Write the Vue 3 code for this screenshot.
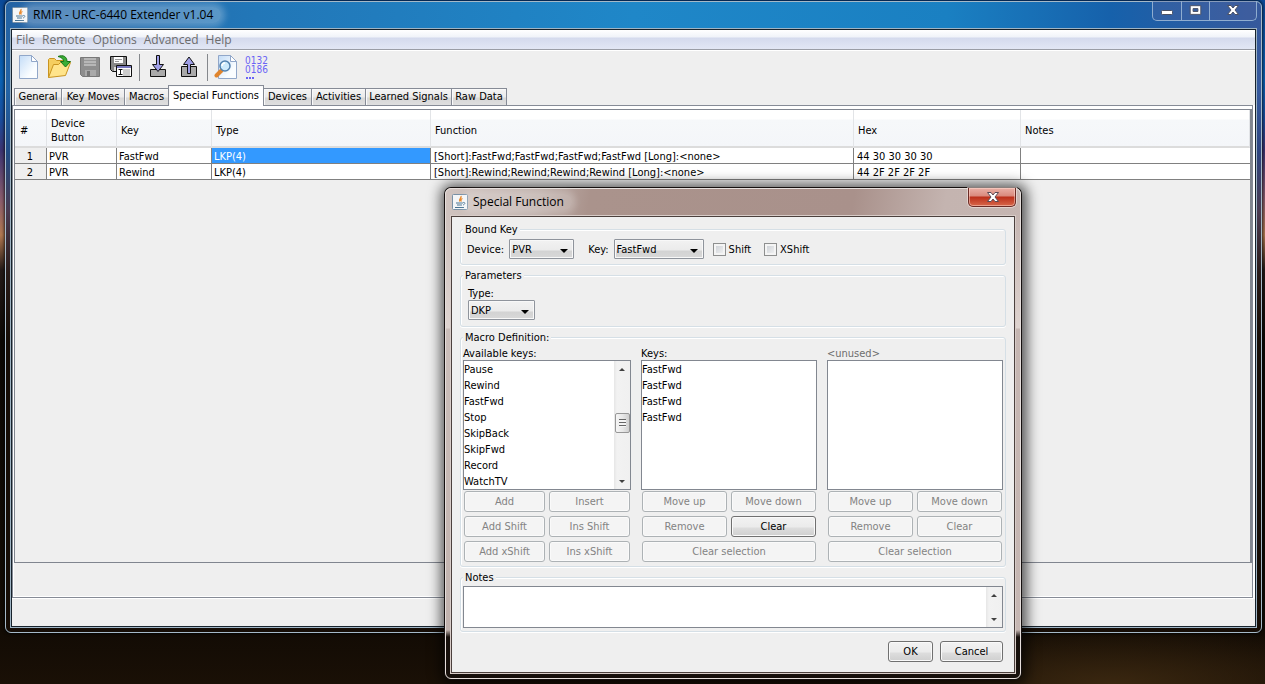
<script setup>
import { ref } from 'vue'

const menus = ['File', 'Remote', 'Options', 'Advanced', 'Help']

const tabs = [
  { name: 'General', width: 47 },
  { name: 'Key Moves', width: 63 },
  { name: 'Macros', width: 44 },
  { name: 'Special Functions', width: 96 },
  { name: 'Devices', width: 47 },
  { name: 'Activities', width: 54 },
  { name: 'Learned Signals', width: 86 },
  { name: 'Raw Data', width: 56 },
]
const activeTab = ref('Special Functions')

const columns = ['#', 'Device Button', 'Key', 'Type', 'Function', 'Hex', 'Notes']
const rows = [
  ['1', 'PVR', 'FastFwd', 'LKP(4)', '[Short]:FastFwd;FastFwd;FastFwd;FastFwd [Long]:<none>', '44 30 30 30 30', ''],
  ['2', 'PVR', 'Rewind', 'LKP(4)', '[Short]:Rewind;Rewind;Rewind;Rewind [Long]:<none>', '44 2F 2F 2F 2F', ''],
]

const device = ref('PVR')
const boundKey = ref('FastFwd')
const type = ref('DKP')
const shift = ref(false)
const xshift = ref(false)
const notes = ref('')

const available = ['Pause', 'Rewind', 'FastFwd', 'Stop', 'SkipBack', 'SkipFwd', 'Record', 'WatchTV']
const keys = ['FastFwd', 'FastFwd', 'FastFwd', 'FastFwd']
const addButtons = ['Add', 'Insert', 'Add Shift', 'Ins Shift', 'Add xShift', 'Ins xShift']
const editButtons = ['Move up', 'Move down', 'Remove', 'Clear', 'Clear selection']
</script>

<template>
  <div class="desktop">
    <section class="window main" aria-label="RMIR">
      <header class="titlebar">
        <svg class="java" viewBox="0 0 16 16" aria-hidden="true">
          <rect x=".5" y=".5" width="15" height="15" rx="1" fill="#f3f5f7" stroke="#7890a5" />
          <path d="M9 2c1 2-3 3-1 5.500M10.500 4.500c-2 1-2 1.500-1 3" fill="none" stroke="#e8801c" stroke-width="1.300" />
          <path d="M4 9h7M5 11h5M3 13.500h9M11 8.500c3-.5 2 2 0 2.500" fill="none" stroke="#44708f" />
        </svg>
        <h1>RMIR - URC-6440 Extender v1.04</h1>
        <div class="controls">
          <button type="button" aria-label="Minimize">
            <svg viewBox="0 0 28 18"><rect x="8.500" y="8.500" width="11" height="4" rx="1" fill="#fff" stroke="#4a5064" /></svg>
          </button>
          <button type="button" aria-label="Maximize">
            <svg viewBox="0 0 28 18"><path d="M8.500 3.500h11v9h-11zM11.500 6.500v3h5v-3z" fill="#fff" fill-rule="evenodd" stroke="#4a5064" /></svg>
          </button>
          <button type="button" class="wide" aria-label="Close">
            <svg viewBox="0 0 46 18"><path d="M17.500 3.500h3.500l2 2.500 2-2.500h3.500l-3.500 4.500 3.500 4.500h-3.500l-2-2.500-2 2.500h-3.500l3.500-4.500z" fill="#fff" stroke="#4a5064" /></svg>
          </button>
        </div>
      </header>

      <div class="client">
        <nav class="menubar">
          <button v-for="m in menus" :key="m" type="button">{{ m }}</button>
        </nav>

        <div class="toolbar" role="toolbar">
          <button type="button" aria-label="New">
            <svg viewBox="0 0 24 24">
              <defs><linearGradient id="paper" x1="0" y1="0" x2="1" y2="1"><stop offset="0" stop-color="#c3dcf7" /><stop offset=".7" stop-color="#fafdff" /></linearGradient></defs>
              <path d="M3.500.5h12l6 6v17h-18z" fill="url(#paper)" stroke="#91a7c9" />
              <path d="M15.500.5v6h6z" fill="#fff" stroke="#91a7c9" />
            </svg>
          </button>
          <button type="button" aria-label="Open">
            <svg viewBox="0 0 24 24">
              <path d="M1.500 22.500V4.500l1-1h5l2 2h8v4" fill="#f5ce60" stroke="#c99420" />
              <path d="M1.500 22.500l5-13h5l2-2h10l-5 13z" fill="#ffe48b" stroke="#c99420" stroke-linejoin="round" />
              <path d="M11 1.500c5-2 9 0 9 5h3.500l-5 5.500-5-5.500h3.200c0-2-1.700-4-5.700-5z" fill="#3aad35" stroke="#187318" />
            </svg>
          </button>
          <button type="button" aria-label="Save" disabled>
            <svg viewBox="0 0 24 24">
              <path d="M2.500 2.500h19v19h-17l-2-2z" fill="#8e8e8e" stroke="#787878" />
              <path d="M6 3h12v8H6z" fill="#b7b7b7" />
              <path d="M6 5.500h12M6 8.500h12" stroke="#989898" />
              <path d="M7 15h11v6H7z" fill="#a9a9a9" /><path d="M9 16h3v5H9z" fill="#777" />
            </svg>
          </button>
          <button type="button" aria-label="Save as">
            <svg viewBox="0 0 24 24">
              <path d="M1.500 1.500h16v15h-14l-2-2z" fill="#888" stroke="#111" />
              <path d="M5 2h9v6H5z" fill="#fff" /><path d="M6 4.500h7M6 6.500h4" stroke="#999" />
              <path d="M5 12h5v4H5z" fill="#ddd" />
              <path d="M7.500 10.500h15v11h-15z" fill="#fff" stroke="#111" />
              <path d="M8 11h14v2H8z" fill="#7777bd" /><path d="M14 14h7v7h-7z" fill="#ccc" />
              <path d="M9.500 14.500h4M11.500 14.500v5M9.500 19.500h4" stroke="#111" />
            </svg>
          </button>
          <i class="sep"></i>
          <button type="button" aria-label="Download">
            <svg viewBox="0 0 24 24">
              <path d="M4.500 14.500h15v7h-15z" fill="#aaa" stroke="#111" />
              <path d="M10.500.5h3v9h4L12 16.500 6.500 9.500h4z" fill="#a0a0e8" stroke="#111" />
            </svg>
          </button>
          <button type="button" aria-label="Upload">
            <svg viewBox="0 0 24 24">
              <path d="M4.500 11.500h15v10h-15z" fill="#aaa" stroke="#111" />
              <path d="M10.500 18.500v-9h-4L12 2l5.500 7.500h-4v9z" fill="#a0a0e8" stroke="#111" />
            </svg>
          </button>
          <i class="sep"></i>
          <button type="button" aria-label="Preview">
            <svg viewBox="0 0 24 24">
              <path d="M4.500.5h12l6 6v17h-18z" fill="url(#paper)" stroke="#91a7c9" />
              <path d="M16.500.5v6h6z" fill="#fff" stroke="#91a7c9" />
              <path d="M2.500 20.500l5-5" stroke="#e0842c" stroke-width="4" stroke-linecap="round" />
              <circle cx="11" cy="11" r="5" fill="#cdeafc" stroke="#5180ae" stroke-width="1.500" />
              <path d="M8 11c0-2 1-3 3-3" fill="none" stroke="#fff" stroke-width="1.500" />
            </svg>
          </button>
          <button type="button" class="digits" aria-label="Raw codes"><span>0132</span><span>0186</span><i></i></button>
        </div>

        <div class="tabs" role="tablist">
          <button
            v-for="t in tabs" :key="t.name" type="button" role="tab"
            :aria-selected="t.name === activeTab" :class="{ on: t.name === activeTab }"
            :style="{ width: t.width + 'px' }" @click="activeTab = t.name"
          >{{ t.name }}</button>
        </div>

        <div class="pane">
          <div class="scrollpane">
            <table>
              <colgroup><col class="c0" /><col class="c1" /><col class="c2" /><col class="c3" /><col class="c4" /><col class="c5" /><col /></colgroup>
              <thead>
                <tr><th v-for="c in columns" :key="c" scope="col">{{ c }}</th></tr>
              </thead>
              <tbody>
                <tr v-for="(r, i) in rows" :key="i">
                  <td v-for="(v, j) in r" :key="j" :class="{ sel: i === 0 && j === 3 }">{{ v }}</td>
                </tr>
              </tbody>
            </table>
          </div>
        </div>
        <div class="status"></div>
      </div>
    </section>

    <section class="window dialog" role="dialog" aria-label="Special Function">
      <header class="titlebar">
        <svg class="java" viewBox="0 0 16 16" aria-hidden="true">
          <rect x=".5" y=".5" width="15" height="15" rx="1" fill="#f3f5f7" stroke="#7890a5" />
          <path d="M9 2c1 2-3 3-1 5.500M10.500 4.500c-2 1-2 1.500-1 3" fill="none" stroke="#e8801c" stroke-width="1.300" />
          <path d="M4 9h7M5 11h5M3 13.500h9M11 8.500c3-.5 2 2 0 2.500" fill="none" stroke="#44708f" />
        </svg>
        <h1>Special Function</h1>
        <button type="button" class="close" aria-label="Close">
          <svg viewBox="0 0 46 18"><path d="M18.500 4.500h3.500l2 2.500 2-2.500h3.500l-3.500 4.500 3.500 4.500h-3.500l-2-2.500-2 2.500h-3.500l3.500-4.500z" fill="#fff" stroke="#5a4a55" /></svg>
        </button>
      </header>

      <form class="client" @submit.prevent>
        <fieldset>
          <legend>Bound Key</legend>
          <div class="bound">
            <label for="device">Device:</label>
            <span class="combo device"><select id="device" v-model="device"><option>PVR</option></select></span>
            <label for="key">Key:</label>
            <span class="combo key"><select id="key" v-model="boundKey"><option>FastFwd</option><option>Rewind</option></select></span>
            <label class="check"><input v-model="shift" type="checkbox" />Shift</label>
            <label class="check"><input v-model="xshift" type="checkbox" />XShift</label>
          </div>
        </fieldset>

        <fieldset>
          <legend>Parameters</legend>
          <div class="params">
            <label for="type">Type:</label>
            <span class="combo type"><select id="type" v-model="type"><option>DKP</option><option>LKP</option></select></span>
          </div>
        </fieldset>

        <fieldset>
          <legend>Macro Definition:</legend>
          <div class="macro">
            <div>
              <div id="l1" class="caption">Available keys:</div>
              <div class="box">
                <ul role="listbox" aria-labelledby="l1"><li v-for="k in available" :key="k" role="option">{{ k }}</li></ul>
                <div class="scrollbar" aria-hidden="true">
                  <i class="up"></i><i class="thumb"></i><i class="down"></i>
                </div>
              </div>
              <div class="buttons"><button v-for="b in addButtons" :key="b" type="button" disabled>{{ b }}</button></div>
            </div>
            <div>
              <div id="l2" class="caption">Keys:</div>
              <div class="box">
                <ul role="listbox" aria-labelledby="l2"><li v-for="(k, i) in keys" :key="i" role="option">{{ k }}</li></ul>
              </div>
              <div class="buttons"><button v-for="b in editButtons" :key="b" type="button" :disabled="b !== 'Clear'">{{ b }}</button></div>
            </div>
            <div>
              <div id="l3" class="caption unused">&lt;unused&gt;</div>
              <div class="box"><ul role="listbox" aria-labelledby="l3"></ul></div>
              <div class="buttons"><button v-for="b in editButtons" :key="b" type="button" disabled>{{ b }}</button></div>
            </div>
          </div>
        </fieldset>

        <fieldset>
          <legend id="notes-title">Notes</legend>
          <div class="box notes">
            <textarea v-model="notes" aria-labelledby="notes-title"></textarea>
            <div class="scrollbar" aria-hidden="true"><i class="up"></i><i class="down"></i></div>
          </div>
        </fieldset>

        <footer>
          <button type="submit" class="ok">OK</button>
          <button type="button" class="cancel">Cancel</button>
        </footer>
      </form>
    </section>
  </div>
</template>

<style>
body { background: #120b05; }
</style>

<style scoped>
* { box-sizing: border-box; margin: 0; padding: 0; }
button, select, textarea, input { font: inherit; color: inherit; }
.desktop {
  position: relative;
  min-height: 100vh;
  overflow: hidden;
  font: 11px/14px "DejaVu Sans Condensed", "DejaVu Sans", sans-serif;
  color: #000;
  background:
    radial-gradient(ellipse 260px 60px at 88% 100%, #3a2710 0%, transparent 100%),
    linear-gradient(#0b4a98 0, #0a62b4 80px, #1a4c9c 120px, #3c3472 150px, #8a5c6c 200px, #b07850 235px, #241a18 270px, #0c0804 340px, #120b04 630px, #1a1006 100%);
}
.window { position: absolute; display: flex; flex-direction: column; border: 1px solid; border-radius: 6px; }
.titlebar { display: flex; align-items: flex-start; }
.titlebar h1 { font: 12px/16px "Open Sans", "Noto Sans", sans-serif; white-space: nowrap; }
.java { width: 16px; height: 16px; flex: none; }
.titlebar button { border: 0; background: none; }
.titlebar button svg { display: block; width: 100%; height: 18px; }

.main {
  inset: 1px 3px 51px 5px;
  border-color: #a5b9c8;
  padding: 0 5px 5px;
  box-shadow: 0 0 3px 1px rgba(0, 0, 0, .7);
  background:
    linear-gradient(transparent 0, transparent 90px, rgba(26, 20, 60, .3) 150px, #4a3a50 210px, #2a1c1a 270px, #160d06 340px),
    linear-gradient(90deg, #2463a4 0, #2277b8 20%, #1f87c8 50%, #1a80c2 75%, #1661ab 88%, #36599c 100%);
}
.main > .titlebar { height: 27px; padding: 5px 0 0 1px; }
.main h1, .dialog h1 { margin-left: -3px; padding: 0 8px; border-radius: 8px; }
.main h1 { background: rgba(255, 255, 255, .25); box-shadow: 0 0 6px 4px rgba(255, 255, 255, .25); }
.controls {
  display: flex;
  margin: -6px -1px 0 auto;
  border: 1px solid #8fadd0;
  border-top: 0;
  border-radius: 0 0 5px 5px;
  background: rgba(80, 100, 160, .35);
}
.controls button { width: 28px; height: 19px; border-left: 1px solid #8fadd0; }
.controls button:first-child { border-left: 0; }
.controls .wide { width: 47px; }
.client { background: #efefef; display: flex; flex-direction: column; flex: 1; border: 1px solid #17222c; }
.main > .client { box-shadow: 0 0 0 1px #9fb4c4; }

.menubar {
  display: flex;
  gap: 7px;
  height: 20px;
  padding-left: 4px;
  border-bottom: 1px solid #9a9da6;
  background: linear-gradient(#fff 0, #f0f3f9 7px, #d4daed 8px, #e2e7f5 100%);
  font: 12px/19px "Open Sans", "Noto Sans", sans-serif;
  color: #6d6d6d;
}
.menubar button { border: 0; background: none; }
.toolbar { display: flex; align-items: center; height: 35px; padding: 0 0 2px; border-top: 1px solid #fff; }
.toolbar button { width: 31px; height: 30px; border: 0; background: none; display: flex; align-items: center; justify-content: center; }
.toolbar svg { width: 24px; height: 24px; }
.toolbar .sep { width: 1px; height: 27px; margin: 0 2px 0 3px; background: #85888c; }
.toolbar .digits { flex-direction: column; color: #6a64f5; font: 10px/9px "DejaVu Sans Condensed", sans-serif; }
.toolbar .digits i {
  width: 8px; height: 2px; margin: 3px 0 0 5px; align-self: flex-start;
  background: repeating-linear-gradient(90deg, #6a64f5 0, #6a64f5 2px, transparent 2px, transparent 3px);
}

.tabs { display: flex; align-items: flex-end; height: 20px; padding-left: 2px; }
.tabs button {
  height: 17px;
  border: 1px solid #868b96;
  border-bottom: 0;
  border-right-width: 0;
  background: linear-gradient(#f4f4f4 0, #ebebeb 8px, #d7d7d7 9px, #dfdfdf 100%);
  line-height: 16px;
  white-space: nowrap;
  box-shadow: inset 1px 1px #fafafa;
}
.tabs button:last-child { border-right-width: 1px; }
.tabs .on { position: relative; height: 21px; margin-bottom: -1px; padding-bottom: 2px; border-right-width: 1px; background: #fff; line-height: 17px; }
.tabs .on + button { border-left: 0; }
.pane { flex: 1; display: flex; margin-right: 2px; padding: 3px 0 34px 1px; border: 1px solid #868b96; box-shadow: inset 1px 3px #fff, inset 0 -1px #fff, 2px 0 #fff; }
.scrollpane { flex: 1; border: 1px solid #80858f; border-right-width: 2px; }
.status { height: 28px; border-top: 1px solid #fff; }

table { width: 100%; table-layout: fixed; border-collapse: separate; border-spacing: 0; background: #fff; }
.c0 { width: 32px; }
.c1 { width: 70px; }
.c2 { width: 95px; }
.c3 { width: 219px; }
.c4 { width: 423px; }
.c5 { width: 167px; }
th {
  height: 38px; padding: 5px 4px 0;
  text-align: left; font-weight: normal; vertical-align: middle;
  border-right: 1px solid #e2e4e7; border-bottom: 2px solid #dcdcdc;
  background: linear-gradient(#fff 0, #fff 9px, #f6f8fa 10px, #f4f6f9 100%);
}
th:first-child { padding-left: 5px; }
td { height: 16px; padding: 2px 3px 0; line-height: 13px; white-space: nowrap; border-right: 1px solid #808080; border-bottom: 1px solid #808080; }
td:nth-child(-n + 4) { padding-left: 2px; }
td:first-child { background: #efefef; text-align: center; }
td:last-child { border-right: 0; }
td.sel { background: #3399ff; color: #fff; }

.dialog {
  left: 445px; top: 188px; width: 576px;
  border-color: #e6dedb;
  padding: 0 5px 5px;
  background:
    linear-gradient(transparent 0, transparent 441px, #17100c 448px),
    linear-gradient(transparent 0, transparent 28px, rgba(230, 220, 216, .75) 139px, transparent 140px),
    linear-gradient(100deg, #d0c4c0 0, #bfb0ab 14%, #aa938c 22%, #a9918b 62%, #c4b4b0 76%, #c6b7b3 100%);
  box-shadow: 0 0 0 1px #15100f, 1px 1px 13px 5px rgba(0, 0, 0, .65);
}
.dialog > .titlebar { height: 27px; padding: 5px 0 0 1px; }
.dialog h1 { background: rgba(255, 255, 255, .2); box-shadow: 0 0 6px 4px rgba(255, 255, 255, .2); }
.titlebar .close {
  width: 48px; height: 19px; margin: -6px -1px 0 auto;
  border: 1px solid #6b2b25; border-top: 0; border-radius: 0 0 5px 5px;
  background: linear-gradient(#eab0a6 0, #d9897c 8px, #bb2f1a 9px, #d8674a 100%);
  box-shadow: inset 0 0 0 1px rgba(255, 220, 210, .5), 0 0 0 1px rgba(255, 240, 235, .5);
}
.dialog > .client { padding: 5px 8px 10px; gap: 3px; border-color: #4b403d; box-shadow: 0 0 0 1px #d8ccc8; }
fieldset { min-width: 0; border: 1px solid #d5dfe6; border-radius: 3px; padding: 0 2px; box-shadow: inset 1px 1px #fff, 0 1px #fff; }
legend { height: 14px; padding: 0 2px; background: #efefef; line-height: 16px; }

.bound { display: flex; align-items: center; height: 28px; padding: 0 0 3px 4px; }
.bound label { padding-top: 2px; }
.bound .combo { margin-left: 5px; }
.bound .combo + label { margin-left: 14px; }
.bound .check { display: flex; align-items: center; margin-left: 10px; }
.bound .combo + .check { margin-left: 9px; }
.bound .check + .check { margin-left: 13px; }
.check input {
  appearance: none; width: 13px; height: 13px; margin-right: 3px;
  border: 1px solid #8e8f8f; background: linear-gradient(135deg, #c8ccd2, #f6f6f6); box-shadow: inset 0 0 0 2px #f4f4f4;
}
.combo { position: relative; display: block; height: 20px; }
.combo select {
  appearance: none; width: 100%; height: 20px; padding: 2px 18px 0 2px;
  border: 1px solid #8f949c; border-radius: 1px;
  background: linear-gradient(#f2f2f2 0, #ebebeb 10px, #d3d3d3 11px, #d8d8d8 100%);
  box-shadow: inset 0 0 0 1px #f8f8f8; line-height: 16px;
}
.combo::after {
  content: ""; position: absolute; right: 6px; top: 10px;
  border: 4px solid transparent; border-top-color: #000; border-bottom: 0; pointer-events: none;
}
.device { width: 65px; }
.key { width: 90px; }
.type { width: 67px; }
.params { padding: 4px 0 6px 5px; }
.params label { display: block; height: 14px; line-height: 16px; }

.macro { display: grid; grid-template-columns: 168fr 176fr 176fr; gap: 10px; padding: 1px 0 4px; }
.caption { height: 15px; line-height: 17px; }
.caption.unused { color: #6d6d6d; }
.box { display: flex; height: 130px; border: 1px solid #828790; background: #fff; }
.box ul { flex: 1; list-style: none; }
.box li { height: 16px; padding-top: 2px; line-height: 14px; }
.buttons { display: grid; grid-template-columns: 1fr 1fr; gap: 4px; padding: 1px 1px 0; }
.buttons button:nth-child(5):last-child { grid-column: span 2; }
.buttons button, footer button {
  height: 21px; border: 1px solid #707070; border-radius: 3px;
  background: linear-gradient(#f2f2f2 0, #ebebeb 10px, #dddddd 11px, #cfcfcf 100%);
  box-shadow: inset 0 0 0 1px #fafafa; line-height: 18px;
}
.buttons button:disabled { border-color: #adb2b5; background: #f4f4f4; color: #838383; }
.scrollbar { width: 16px; display: flex; flex-direction: column; align-items: center; padding: 7px 0 6px; background: linear-gradient(90deg, #e6e6e6, #f2f2f2 3px, #f0f0f0); }
.scrollbar i { flex: none; }
.up, .down { border: 4px solid transparent; }
.up { border-top: 0; border-bottom-color: #404040; }
.down { border-bottom: 0; border-top-color: #404040; margin-top: auto; }
.thumb {
  width: 15px; height: 20px; margin-top: 42px; border: 1px solid #979797; border-radius: 2px;
  background:
    repeating-linear-gradient(#666 0, #666 1px, #f4f4f4 1px, #f4f4f4 3px) 3px 5px / 7px 8px no-repeat,
    linear-gradient(90deg, #f5f5f5, #e8e8e8 50%, #cfcfcf);
}
.up, .down { border-width: 3px; }
.up { border-top-width: 0; }
.down { border-bottom-width: 0; }
.notes { height: 42px; margin-top: 2px; margin-bottom: 3px; }
.notes textarea { flex: 1; border: 0; resize: none; background: #fff; outline: 0; }
footer { display: flex; justify-content: flex-end; gap: 7px; padding: 6px 3px 0 0; }
.ok { width: 45px; }
.cancel { width: 63px; }
</style>
